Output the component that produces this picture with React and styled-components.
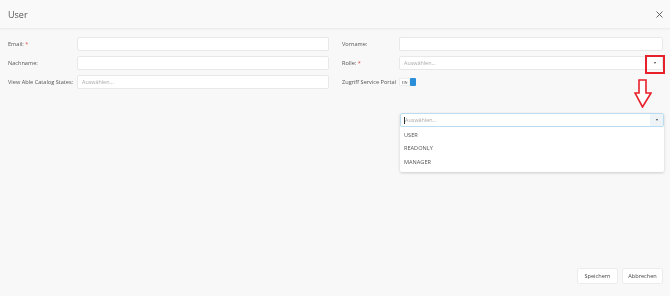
import React from 'react'
import styled, { createGlobalStyle } from 'styled-components'

const GlobalStyle = createGlobalStyle`
	html, body {
		margin: 0;
		padding: 0;
		background: #f8f8f8;
		font-family: 'Open Sans', 'Liberation Sans', sans-serif;
		color: #555;
	}
`

const roles = ['USER', 'READONLY', 'MANAGER']

const App = () => {
	return (
		<>
			<GlobalStyle />
			<Page>
				<Header>
					<Title>User</Title>
					<Close>
						<svg width='7' height='7' viewBox='0 0 7 7'>
							<path d='M0.5 0.5L6.5 6.5M6.5 0.5L0.5 6.5' stroke='#555' strokeWidth='0.9' />
						</svg>
					</Close>
				</Header>
				<Body>
					<Form>
						<Label>
							Email: <Req>*</Req>
						</Label>
						<Input />
						<Label $right>Vorname:</Label>
						<Input />

						<Label>Nachname:</Label>
						<Input />
						<Label $right>
							Rolle: <Req>*</Req>
						</Label>
						<Input>
							<Placeholder>Auswählen...</Placeholder>
							<Caret />
						</Input>

						<Label>View Able Catalog States:</Label>
						<Input>
							<Placeholder>Auswählen...</Placeholder>
						</Input>
						<Label $right>Zugriff Service Portal</Label>
						<Toggle>
							<ToggleText>EIN</ToggleText>
							<ToggleKnob />
						</Toggle>
					</Form>

					<Mark />
					<Arrow width='18' height='29' viewBox='0 0 18 29'>
						<path
							d='M5 1H12V14H17L8.5 28L1 14H5Z'
							fill='#fff'
							stroke='#e8202a'
							strokeWidth='1.6'
							strokeLinejoin='miter'
						/>
					</Arrow>

					<Select>
						<SelectBox>
							<SelectField>
								<Cursor />
								<Placeholder>Auswählen...</Placeholder>
							</SelectField>
							<SelectButton>
								<Caret />
							</SelectButton>
						</SelectBox>
						<Options>
							{roles.map((role) => (
								<Option key={role}>{role}</Option>
							))}
						</Options>
					</Select>
				</Body>
				<Footer>
					<Button>Speichern</Button>
					<Button>Abbrechen</Button>
				</Footer>
			</Page>
		</>
	)
}

const Page = styled.div`
	height: 100vh;
	display: flex;
	flex-direction: column;
	overflow: hidden;
	transform: translateZ(0);
`

const Header = styled.div`
	height: 29px;
	box-sizing: border-box;
	display: flex;
	align-items: center;
	justify-content: space-between;
	padding: 0 7px 0 8px;
	background: #f9f9f9;
	border-bottom: 1px solid #ececec;
	box-shadow: 0 1px 2px rgba(0, 0, 0, 0.03);
`

const Title = styled.h1`
	margin: 0;
	font-size: 9px;
	font-weight: 400;
	color: #555;
`

const Close = styled.div`
	display: flex;
	align-items: center;
`

const Body = styled.div`
	flex: 1;
	position: relative;
	padding: 8px 7px 0 8px;
`

const Form = styled.div`
	display: grid;
	grid-template-columns: 69px 252px 70px 1fr;
	grid-auto-rows: 14px;
	row-gap: 5px;
	align-items: center;
`

const Label = styled.div`
	font-size: 5.6px;
	color: #555;
	padding-left: ${(p) => (p.$right ? '13px' : '0')};
	white-space: nowrap;
`

const Req = styled.span`
	color: #d9534f;
`

const Input = styled.div`
	height: 14px;
	box-sizing: border-box;
	background: #fff;
	border: 1px solid #e8e8e8;
	border-radius: 2px;
	display: flex;
	align-items: center;
	justify-content: space-between;
	padding: 0 6px 0 4px;
`

const Placeholder = styled.span`
	font-size: 5.4px;
	color: #aaa;
`

const Caret = styled.span`
	width: 0;
	height: 0;
	border-left: 1.5px solid transparent;
	border-right: 1.5px solid transparent;
	border-top: 2px solid #444;
`

const Toggle = styled.div`
	display: flex;
	align-items: center;
	height: 8px;
	width: 18px;
`

const ToggleText = styled.span`
	height: 8px;
	width: 11px;
	box-sizing: border-box;
	border: 1px solid #eee;
	background: #fff;
	font-size: 3.6px;
	color: #555;
	display: flex;
	align-items: center;
	justify-content: center;
`

const ToggleKnob = styled.span`
	width: 6px;
	height: 8px;
	background: #2a8fd8;
	border-radius: 1px;
`

const Mark = styled.div`
	position: absolute;
	left: 645px;
	top: 26px;
	width: 20px;
	height: 19px;
	box-sizing: border-box;
	border: 2px solid #e8202a;
`

const Arrow = styled.svg`
	position: absolute;
	left: 634px;
	top: 50px;
`

const Select = styled.div`
	margin: 24px -1px 0 392px;
	background: #fff;
	box-shadow: 0 1px 3px rgba(0, 0, 0, 0.18);
	border-radius: 2px;
`

const SelectBox = styled.div`
	height: 14px;
	box-sizing: border-box;
	display: flex;
	border: 1px solid #b9dcf0;
	border-radius: 2px;
`

const SelectField = styled.div`
	flex: 1;
	display: flex;
	align-items: center;
	padding-left: 3px;
`

const Cursor = styled.span`
	width: 0.6px;
	height: 7px;
	background: #333;
	margin-right: 0.5px;
`

const SelectButton = styled.div`
	width: 13px;
	background: #eef3f7;
	display: flex;
	align-items: center;
	justify-content: center;
`

const Options = styled.div`
	padding: 1px 0 3px;
`

const Option = styled.div`
	height: 13.5px;
	display: flex;
	align-items: center;
	padding-left: 4px;
	font-size: 5.6px;
	color: #555;
`

const Footer = styled.div`
	display: flex;
	justify-content: flex-end;
	gap: 4px;
	padding: 0 7px 12px 0;
`

const Button = styled.button`
	width: 41px;
	height: 16px;
	box-sizing: border-box;
	background: #fff;
	border: 1px solid #ececec;
	border-radius: 2px;
	font-family: 'Open Sans', 'Liberation Sans', sans-serif;
	font-size: 5.6px;
	color: #444;
	padding: 0;
`

export default App
